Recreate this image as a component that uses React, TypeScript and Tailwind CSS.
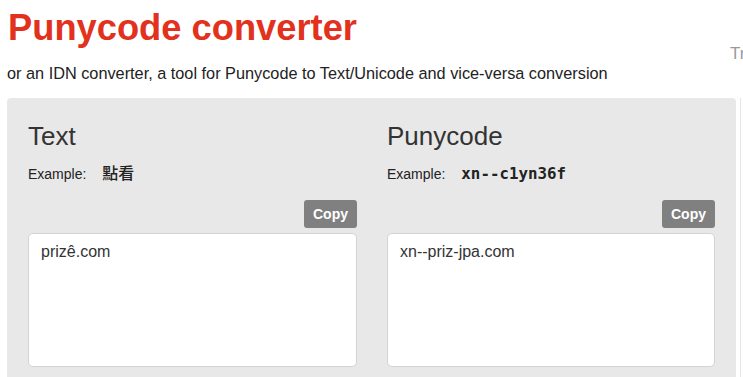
import { useState } from "react";

const sans = "font-['Liberation_Sans','Noto_Sans_CJK_TC',Arial,sans-serif]";

interface ColumnProps {
  title: string;
  example: React.ReactNode;
  value: string;
  onChange: (v: string) => void;
}

function Column({ title, example, value, onChange }: ColumnProps) {
  return (
    <div className="flex flex-col">
      <h2 className="text-[26px] leading-[26px] text-[#333] font-normal">
        {title}
      </h2>
      <p className="mt-[15px] text-[14px] leading-[20px] text-[#222] flex items-baseline">
        <span>Example:</span>
        {example}
      </p>
      <div className="mt-[16px] flex justify-end">
        <button className="w-[53px] h-[28px] rounded-[3px] bg-[#808080] text-white text-[14px] font-bold">
          Copy
        </button>
      </div>
      <textarea
        className="mt-[5px] h-[134px] w-full resize-none rounded-[5px] border border-[#d4d4d4] bg-white px-[12px] pt-[8px] text-[16px] leading-[20px] text-[#333] outline-none"
        value={value}
        onChange={(e) => onChange(e.target.value)}
        spellCheck={false}
      />
    </div>
  );
}

export default function App() {
  const [text, setText] = useState("prizê.com");
  const [puny, setPuny] = useState("xn--priz-jpa.com");

  return (
    <div className={`${sans} w-[743px] h-[377px] overflow-hidden bg-white pl-[7px]`}>
      <div className="flex">
        <div className="w-[723px] shrink-0">
          <h1 className="pt-[10px] pl-[1px] text-[36.3px] leading-[36px] font-bold text-[#e2311d]">
            Punycode converter
          </h1>
          <p className="mt-[17px] text-[16.3px] leading-[20px] text-[#222]">
            or an IDN converter, a tool for Punycode to Text/Unicode and
            vice-versa conversion
          </p>
        </div>
        <span className="mt-[44px] whitespace-nowrap text-[17px] leading-[20px] text-[#9a9a9a]">
          Translate
        </span>
      </div>

      <div className="mt-[15px] flex">
        <div className="w-[729px] shrink-0 rounded-t-[4px] bg-[#e8e8e8] px-[21px] pt-[25px] pb-[20px]">
          <div className="grid grid-cols-[329px_328px] gap-[30px]">
            <Column
              title="Text"
              example={<span className="ml-[16px] text-[16px] font-medium">點看</span>}
              value={text}
              onChange={setText}
            />
            <Column
              title="Punycode"
              example={
                <span className="ml-[16px] font-['DejaVu_Sans_Mono',monospace] text-[15.8px] font-bold">
                  xn--c1yn36f
                </span>
              }
              value={puny}
              onChange={setPuny}
            />
          </div>
        </div>
        <div className="ml-[4px] h-[300px] border-l border-[#e6e6e6]" />
      </div>
    </div>
  );
}
